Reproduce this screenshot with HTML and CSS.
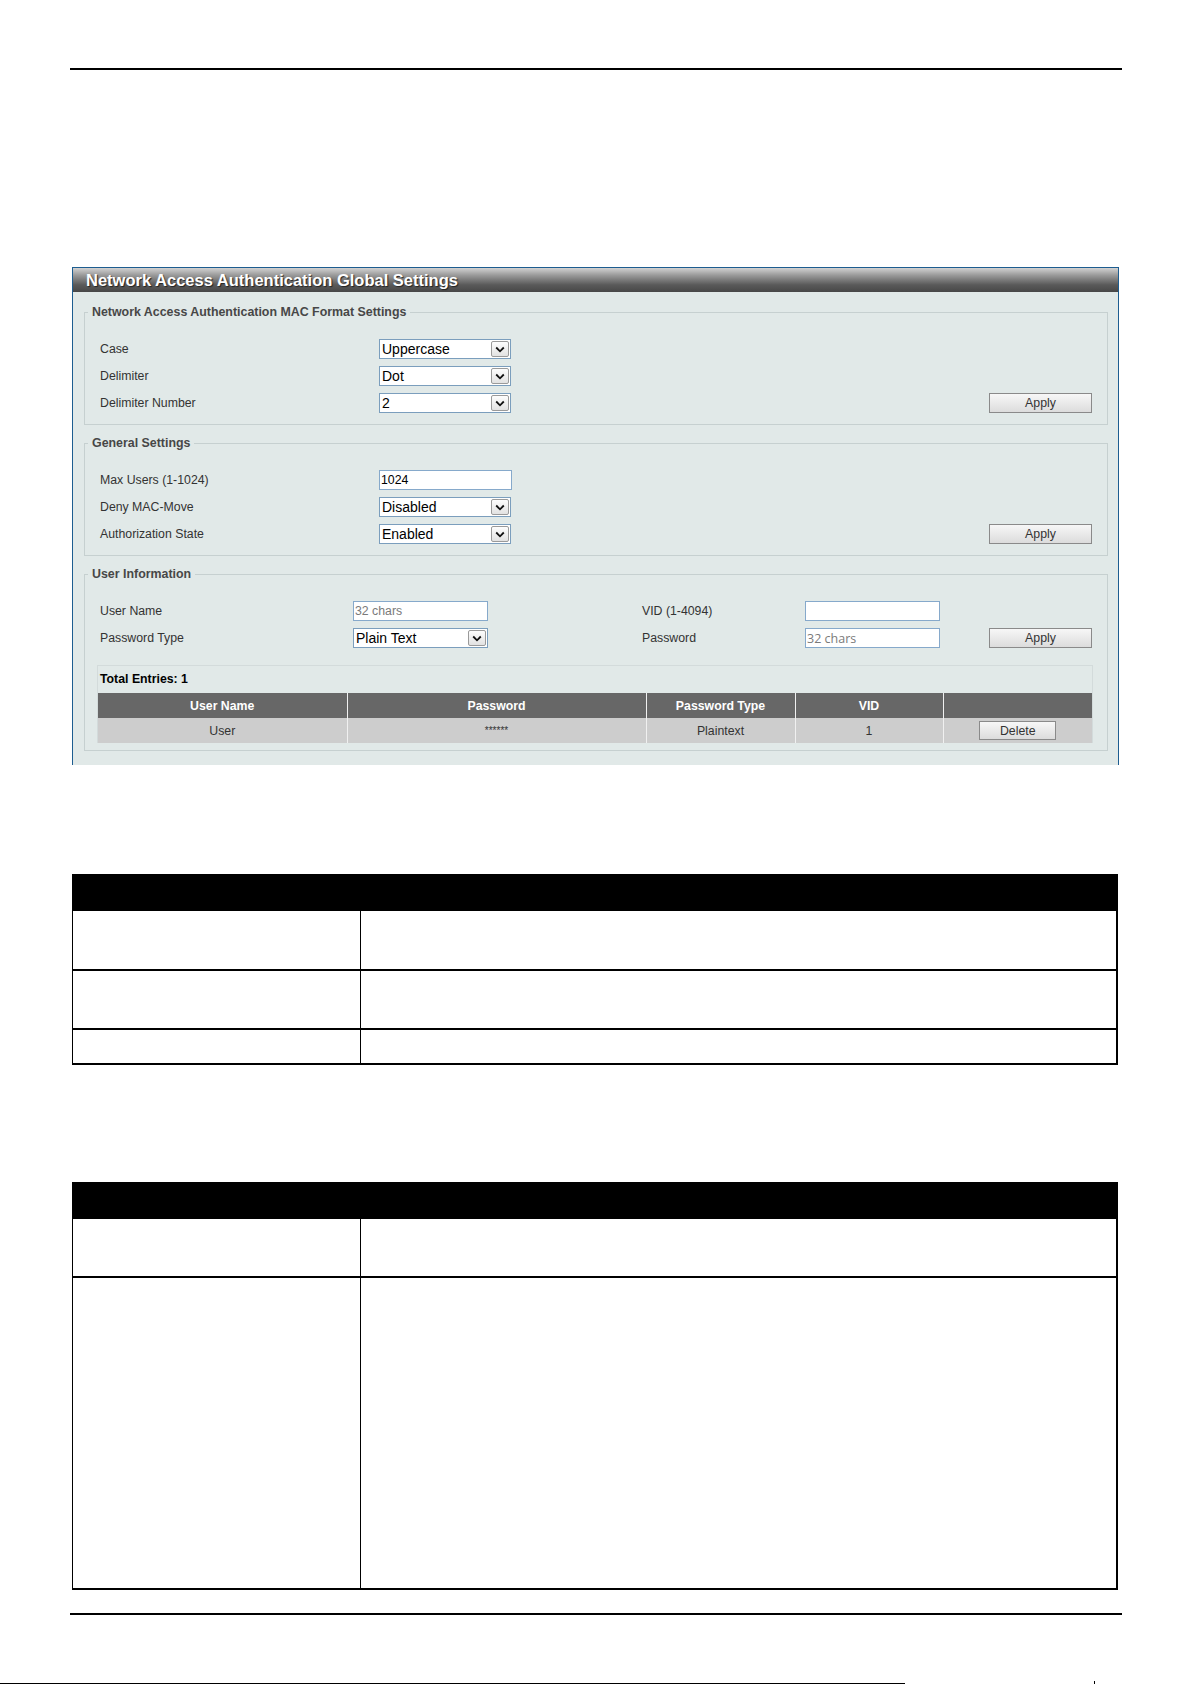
FILE: index.html
```html
<!DOCTYPE html>
<html lang="en">
<head>
  <meta charset="UTF-8">
  <meta name="viewport" content="width=device-width, initial-scale=1">
  <title>Network Access Authentication Global Settings</title>
  <link rel="stylesheet" href="styles.css">
</head>
<body>

<div class="page">
  <div class="rule"></div>

  <div class="panel">
    <div class="panel-title">Network Access Authentication Global Settings</div>
    <div class="panel-body">

      <fieldset>
        <legend>Network Access Authentication MAC Format Settings</legend>
        <div class="fs-body">
          <div class="form-grid">
            <label>Case</label>
            <span class="select">
              <select><option>Uppercase</option><option>Lowercase</option></select>
              <span class="select-arrow"><svg width="10" height="7" viewBox="0 0 10 7"><path d="M1.2 1.5l3.8 3.8 3.8-3.8" fill="none" stroke="#111" stroke-width="1.8"/></svg></span>
            </span>

            <label>Delimiter</label>
            <span class="select">
              <select><option>Dot</option><option>Colon</option><option>Hyphen</option><option>None</option></select>
              <span class="select-arrow"><svg width="10" height="7" viewBox="0 0 10 7"><path d="M1.2 1.5l3.8 3.8 3.8-3.8" fill="none" stroke="#111" stroke-width="1.8"/></svg></span>
            </span>

            <label>Delimiter Number</label>
            <span class="select">
              <select><option>2</option><option>1</option><option>5</option></select>
              <span class="select-arrow"><svg width="10" height="7" viewBox="0 0 10 7"><path d="M1.2 1.5l3.8 3.8 3.8-3.8" fill="none" stroke="#111" stroke-width="1.8"/></svg></span>
            </span>
            <button class="btn">Apply</button>
          </div>
        </div>
      </fieldset>

      <fieldset>
        <legend>General Settings</legend>
        <div class="fs-body">
          <div class="form-grid">
            <label>Max Users (1-1024)</label>
            <input class="text" type="text" value="1024">

            <label>Deny MAC-Move</label>
            <span class="select">
              <select><option>Disabled</option><option>Enabled</option></select>
              <span class="select-arrow"><svg width="10" height="7" viewBox="0 0 10 7"><path d="M1.2 1.5l3.8 3.8 3.8-3.8" fill="none" stroke="#111" stroke-width="1.8"/></svg></span>
            </span>

            <label>Authorization State</label>
            <span class="select">
              <select><option>Enabled</option><option>Disabled</option></select>
              <span class="select-arrow"><svg width="10" height="7" viewBox="0 0 10 7"><path d="M1.2 1.5l3.8 3.8 3.8-3.8" fill="none" stroke="#111" stroke-width="1.8"/></svg></span>
            </span>
            <button class="btn">Apply</button>
          </div>
        </div>
      </fieldset>

      <fieldset>
        <legend>User Information</legend>
        <div class="fs-body fs-body-tight">
          <div class="user-grid">
            <label>User Name</label>
            <input class="text text-wide" type="text" placeholder="32 chars">
            <label class="right-label">VID (1-4094)</label>
            <input class="text text-wide" type="text">

            <label>Password Type</label>
            <span class="select select-wide">
              <select><option>Plain Text</option><option>Encrypted</option></select>
              <span class="select-arrow"><svg width="10" height="7" viewBox="0 0 10 7"><path d="M1.2 1.5l3.8 3.8 3.8-3.8" fill="none" stroke="#111" stroke-width="1.8"/></svg></span>
            </span>
            <label class="right-label">Password</label>
            <input class="text text-wide text-pass" type="text" placeholder="32 chars">
            <button class="btn">Apply</button>
          </div>

          <div class="entries">
            <div class="entries-total">Total Entries: 1</div>
            <table class="user-table">
              <tr>
                <th class="w-name">User Name</th>
                <th class="w-pass">Password</th>
                <th class="w-type">Password Type</th>
                <th class="w-vid">VID</th>
                <th></th>
              </tr>
              <tr>
                <td>User</td>
                <td class="stars">******</td>
                <td>Plaintext</td>
                <td>1</td>
                <td><button class="btn btn-delete">Delete</button></td>
              </tr>
            </table>
          </div>
        </div>
      </fieldset>

    </div>
  </div>

  <table class="doc-table doc-table-first">
    <tr><th></th><th></th></tr>
    <tr class="row-2"><td></td><td></td></tr>
    <tr class="row-2"><td></td><td></td></tr>
    <tr class="row-1"><td></td><td></td></tr>
  </table>

  <table class="doc-table doc-table-second">
    <tr><th></th><th></th></tr>
    <tr class="row-2"><td></td><td></td></tr>
    <tr class="row-tall"><td></td><td></td></tr>
  </table>

  <div class="rule rule-bottom"></div>

  <div class="footer">
    <div class="footer-line"></div>
    <div class="footer-tick"></div>
  </div>
</div>

</body>
</html>
```

FILE: styles.css
```css
* {
  box-sizing: border-box;
}
html, body {
  margin: 0;
}
body {
  font-family: "Liberation Sans", Arial, sans-serif;
  background: #fff;
  color: #000;
  overflow: hidden;
}
.page {
  width: 1192px;
  height: 1684px;
}
.rule {
  margin: 68px 70px 0 70px;
  height: 2px;
  background: #000;
}

/* settings panel */
.panel {
  margin: 197px 73px 0 72px;
  height: 498px;
  border: 1px solid #1d5d90;
  border-bottom: none;
  background: #e1e9e8;
  overflow: hidden;
}
.panel-title {
  height: 24px;
  line-height: 24px;
  padding-left: 13px;
  font-size: 16.5px;
  font-weight: bold;
  color: #fff;
  text-shadow: 1px 1px 1px #222;
  background: linear-gradient(#d2d2d2, #9a9a9a 30%, #5a5a5a 70%, #474747);
}
.panel-body {
  padding: 13px 10px 13px 11px;
}
fieldset {
  margin: 0;
  padding: 0;
  min-width: 0;
  border: 1px solid #c6d0d0;
}
fieldset + fieldset {
  margin-top: 11px;
}
legend {
  margin-left: 3px;
  padding: 0 4px;
  font-size: 12.4px;
  line-height: 14px;
  font-weight: bold;
  color: #474747;
}
.fs-body {
  padding: 20px 15px 11px 15px;
}
.fs-body-tight {
  padding-bottom: 7px;
}
label {
  display: flex;
  align-items: center;
  height: 20px;
  font-size: 12.3px;
  color: #333;
}
.form-grid {
  display: grid;
  grid-template-columns: 279px 132px 1fr 103px;
  grid-auto-rows: 20px;
  row-gap: 7px;
}
.form-grid label {
  grid-column: 1;
}
.form-grid .btn {
  grid-column: 4;
}
.user-grid {
  display: grid;
  grid-template-columns: 253px 135px 154px 163px 135px 1fr 103px;
  grid-auto-rows: 20px;
  row-gap: 7px;
}
.user-grid label {
  grid-column: 1;
}
.user-grid .right-label {
  grid-column: 4;
}
.user-grid .btn {
  grid-column: 7;
}

/* controls */
.select {
  position: relative;
  display: block;
  width: 132px;
  height: 20px;
}
.select-wide {
  width: 135px;
}
.select select {
  appearance: none;
  -webkit-appearance: none;
  display: block;
  width: 100%;
  height: 100%;
  margin: 0;
  padding: 0 0 0 2px;
  border: 1px solid #7b9ebd;
  border-radius: 0;
  background: #fff;
  font-family: "Liberation Sans", Arial, sans-serif;
  font-size: 14px;
  color: #000;
}
.select-arrow {
  position: absolute;
  top: 2px;
  right: 2px;
  bottom: 2px;
  width: 18px;
  display: flex;
  align-items: center;
  justify-content: center;
  border: 1px solid #9a9a9a;
  border-radius: 2px;
  background: linear-gradient(#fdfdfd, #e2e2e2);
  pointer-events: none;
}
.text {
  display: block;
  width: 133px;
  height: 20px;
  margin: 0;
  padding: 0 1px;
  border: 1px solid #86a9cb;
  border-radius: 0;
  background: #fff;
  font-family: "Liberation Sans", Arial, sans-serif;
  font-size: 12.3px;
  color: #000;
}
.text-wide {
  width: 135px;
}
.text::placeholder {
  color: #7a7a7a;
}
.text-pass {
  font-family: "Open Sans", "DejaVu Sans", sans-serif;
  font-size: 12.5px;
}
.btn {
  display: block;
  width: 103px;
  height: 20px;
  margin: 0;
  padding: 0;
  border: 1px solid #8a8a8a;
  border-radius: 0;
  background: linear-gradient(#f7f7f7, #dcdcdc);
  font-family: "Liberation Sans", Arial, sans-serif;
  font-size: 12.3px;
  color: #333;
}

/* user entries */
.entries {
  margin: 17px -1px 0 -3px;
  border: 1px solid #d3dbdb;
  border-bottom: none;
}
.entries-total {
  height: 27px;
  line-height: 27px;
  padding-left: 2px;
  font-size: 12.3px;
  font-weight: bold;
}
.user-table {
  width: 100%;
  border-collapse: collapse;
  font-size: 12.3px;
  text-align: center;
}
.user-table th {
  height: 25px;
  padding: 0;
  background: #676767;
  color: #fff;
  font-weight: bold;
}
.user-table td {
  height: 25px;
  padding: 0;
  background: #cdcdcd;
  color: #333;
}
.user-table th + th,
.user-table td + td {
  border-left: 1px solid #f0f0f0;
}
.user-table .stars {
  font-size: 10px;
}
.w-name { width: 249px; }
.w-pass { width: 299px; }
.w-type { width: 149px; }
.w-vid { width: 148px; }
.btn-delete {
  width: 77px;
  height: 19px;
  margin: 0 auto;
}

/* parameter tables */
.doc-table {
  margin-left: 72px;
  width: 1046px;
  border-collapse: collapse;
}
.doc-table-first {
  margin-top: 109px;
}
.doc-table-second {
  margin-top: 117px;
}
.doc-table th {
  height: 36px;
  padding: 0;
  background: #000;
  border: 1px solid #000;
}
.doc-table td {
  padding: 0;
  border: 1px solid #000;
  border-bottom-width: 2px;
}
.doc-table td:first-child {
  width: 288px;
}
.doc-table td:last-child {
  border-right-width: 2px;
}
.doc-table .row-1 td { height: 35px; }
.doc-table .row-2 td { height: 59px; }
.doc-table .row-tall td { height: 312px; }

.rule-bottom {
  margin-top: 23px;
}
.footer {
  display: flex;
  align-items: flex-end;
  height: 3px;
  margin-top: 66px;
}
.footer-line {
  width: 905px;
  height: 1px;
  background: #000;
}
.footer-tick {
  width: 1px;
  height: 3px;
  margin-left: 189px;
  background: #000;
}
```
